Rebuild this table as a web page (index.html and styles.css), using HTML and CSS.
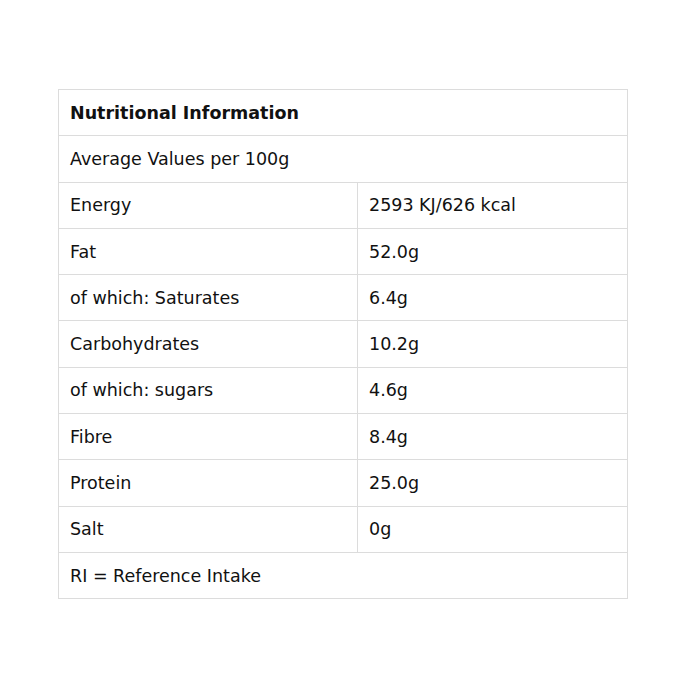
FILE: index.html
```html
<!DOCTYPE html>
<html>
<head>
<meta charset="utf-8">
<link rel="stylesheet" href="styles.css">
</head>
<body>
<div class="page">
<table class="nutri">
<tr><th colspan="2">Nutritional Information</th></tr>
<tr><td colspan="2">Average Values per 100g</td></tr>
<tr><td class="label">Energy</td><td>2593 KJ/626 kcal</td></tr>
<tr><td class="label">Fat</td><td>52.0g</td></tr>
<tr><td class="label">of which: Saturates</td><td>6.4g</td></tr>
<tr><td class="label">Carbohydrates</td><td>10.2g</td></tr>
<tr><td class="label">of which: sugars</td><td>4.6g</td></tr>
<tr><td class="label">Fibre</td><td>8.4g</td></tr>
<tr><td class="label">Protein</td><td>25.0g</td></tr>
<tr><td class="label">Salt</td><td>0g</td></tr>
<tr><td colspan="2">RI = Reference Intake</td></tr>
</table>
</div>
</body>
</html>
```

FILE: styles.css
```css
html, body {
  margin: 0;
  padding: 0;
  background: #fff;
}
.page {
  padding: 89px 0 0 58px;
}
.nutri {
  border-collapse: collapse;
  width: 570px;
  font-family: "DejaVu Sans", Verdana, sans-serif;
  font-size: 17.5px;
  color: #111;
}
.nutri th, .nutri td {
  border: 1px solid #dcdcdc;
  height: 46.3px;
  padding: 0 11px;
  text-align: left;
  vertical-align: middle;
  box-sizing: border-box;
}
.nutri th {
  font-weight: bold;
}
.nutri td.label {
  width: 299px;
}
```
